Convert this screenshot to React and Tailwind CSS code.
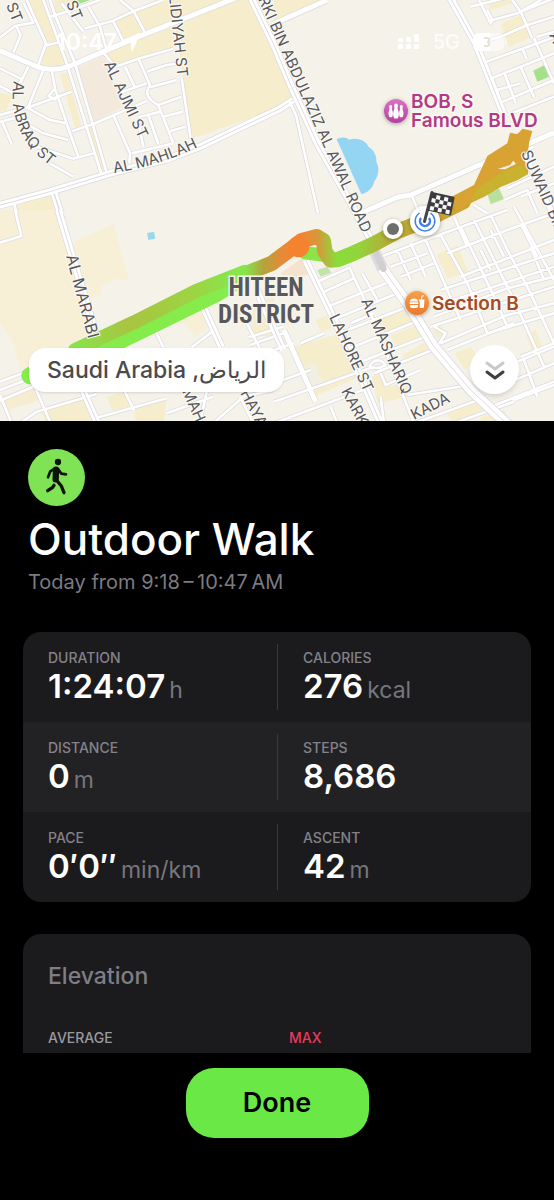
import React from "react";

// Street geometry is drawn at three units per pixel, one sheet per quarter of the map.
const SHEETS = [
  {
    at: "translate(0 0)",
    land: [
      ["#f6edcc", "M525 78L700 0L757 0L822 135L900 290L822 330L570 418L550 230Z"],
      ["#f6edcc", "M345 66L405 35L500 0L690 0L480 85L370 125Z"],
      ["#f6edcc", "M315 155L522 80L520 142L345 195Z"],
      ["#f6edcc", "M80 0L132 0L180 128L138 126Z"],
      ["#f6edcc", "M140 140L185 130L200 185L150 205L122 196Z"],
      ["#f6edcc", "M165 0L240 0L160 45Z"],
      ["#f6edcc", "M180 222L202 218L245 380L225 385Z"],
      ["#f6edcc", "M265 385L283 378L312 510L302 512Z"],
      ["#f6edcc", "M0 278L38 288L20 330L0 338Z"],
      ["#f6edcc", "M45 612L155 582L165 640L45 640Z"],
      ["#f3e9dd", "M232 203L312 166L365 322L282 365Z"],
      ["#a6e08c", "M222 0L270 0L235 13Z"],
    ],
    minor:
      "M0 112L45 78L100 68L70 8M50 80L62 105L40 158M80 0L138 130L115 195M138 136L180 126M130 0L200 190L305 525M150 0L165 45L225 190L320 518M150 50L200 35L300 0M185 10L250 95M265 20L300 80L320 150M360 0L400 32L435 98M255 85L340 62L400 34L490 0M340 65L372 128M0 205L70 240M0 258L45 282M85 200L60 250M130 210L85 320M0 345L90 320L215 275M85 325L150 360L200 370M80 372L130 400L205 420M5 362L35 432M0 366L60 350M155 210L165 265L205 385L235 470M165 265L146 288L168 300M215 394L280 372L440 303M110 440L220 476L282 460M150 490L220 530M312 160L345 200M345 200L420 175L520 146M375 200L405 262M415 175L450 255Q425 290 475 315L520 430M440 215L500 195L525 192M360 278L440 250M450 262L530 240M475 315L545 290M490 350L550 335M505 395L555 380M545 235L572 415M340 345L390 460L388 490M395 460L520 430M445 345L475 432M415 365L430 440M415 352L482 335M153 572L175 640M165 570L188 640M40 600L50 640",
    major: "M730 -15L410 112L240 185Q160 225 100 195L0 152",
    double: "M-5 617L150 575L330 520L500 478L600 440L840 326L880 300M752 -10L822 135L876 264",
  },
  {
    at: "translate(822 0)",
    land: [
      ["#f6edcc", "M0 0L150 0L0 62Z"],
      ["#f6edcc", "M680 72L750 40L775 110L705 140Z"],
      ["#f6edcc", "M640 0L705 0L720 8L650 30Z"],
      ["#a6e08c", "M778 212L812 195L826 230L790 245Z"],
      ["#b9e09c", "M638 575L675 565L690 597L650 613Z"],
      ["#93d5f3", "M188 418C205 409 216 412 225 419C252 411 277 424 283 440C300 450 309 468 307 487C319 505 312 532 300 545C298 566 276 580 262 582Z"],
    ],
    minor:
      "M615 0L650 70L655 60L730 40L840 -5M590 20L690 -5M610 130L680 110L760 75L840 50M715 0L740 35L775 115M740 35L800 0M640 30L655 60M625 190L720 155L840 112M745 145L758 178M640 240L740 200L840 160M655 235L690 335M690 215L725 310M740 200L780 292M660 272L740 250M670 312L840 240M780 115L840 250M700 345L840 290M620 500L780 440M700 565L840 500M740 590L840 550M415 590L435 640M600 615L640 640M690 600L760 570L790 640M45 302L66 345L132 640M790 110L840 95",
    major: "M260 640L370 592L410 585L600 502L840 398M720 400L750 460L840 650M-5 73L160 0",
    double: "M530 -5L605 130L690 345M55 265L130 430L300 735",
  },
  {
    at: "translate(0 630)",
    land: [
      ["#f7f0d6", "M0 0L170 0L215 130L228 92L340 42L388 210L350 206L300 230L305 258L278 265L260 385L60 480L40 400L0 340Z"],
      ["#f7f0d6", "M530 320L600 290L625 350L590 380Z"],
      ["#f6ecd0", "M0 560L100 530L120 570L20 600Z"],
      ["#f6edcc", "M120 600L260 560L285 640L140 640Z"],
      ["#f6edcc", "M320 560L378 545L392 595L340 605Z"],
      ["#f6edcc", "M400 600L500 570L490 640L410 640Z"],
      ["#f6edcc", "M760 290L822 260L822 380L750 375Z"],
      ["#9bd8ee", "M441 69L462 65L466 86L445 90Z"],
    ],
    minor:
      "M45 0L64 78L0 98M0 515L80 485M0 540L85 508M0 572L100 530L250 485M100 520L152 640M0 555L35 640M60 640L110 605L290 552M375 545L402 602M285 625L500 565M465 360L490 412M575 412L640 362M720 300L800 455M745 382L850 350M750 405L850 370M500 610L640 560M640 640L730 560L822 540M720 560L760 640M620 545L600 640",
    major: "",
    double: "M175 0L220 150L300 410M240 520L295 645M605 280L665 412M770 240L850 420",
  },
  {
    at: "translate(822 630)",
    land: [
      ["#f5e3cf", "M20 190L90 140L112 190L40 215Z"],
      ["#c2e3ad", "M130 180L160 170L172 188L140 200Z"],
      ["#f6edcc", "M488 135L550 105L582 185L520 205Z"],
      ["#f6edcc", "M62 410L200 370L255 500L120 560Z"],
      ["#f2eee0", "M90 470L120 455L150 520L115 540Z"],
      ["#f6edcc", "M125 330L165 315L185 350L140 365Z"],
      ["#f6edcc", "M300 330L380 298L425 335L335 370Z"],
      ["#f6edcc", "M350 375L435 345L455 380L370 420Z"],
      ["#f6edcc", "M385 435L465 390L500 415L400 460Z"],
      ["#f6edcc", "M295 500L325 485L350 530L400 510L410 560L310 580Z"],
      ["#f6edcc", "M475 360L500 345L515 370L490 385Z"],
      ["#f6edcc", "M540 430L590 412L610 440L575 480Z"],
      ["#f6edcc", "M510 600L620 560L660 585L540 640Z"],
      ["#f6edcc", "M755 375L785 360L805 410L775 425Z"],
      ["#f6edcc", "M620 620L690 600L710 640L620 640Z"],
    ],
    minor:
      "M130 215L230 172M150 245L240 205M160 290L360 210M175 330L370 250M195 370L390 295M215 420L425 335M235 465L460 378M300 490L500 410M285 470Q310 435 335 465Q310 480 285 470M320 490L335 525L440 480M400 555L590 525M225 170L290 310L420 640M265 190L310 270M320 140L440 95L700 0M350 170L460 130M380 200L480 160M370 120L410 210M410 100L455 200M455 90L520 240L560 330M500 75L580 220L640 370M560 50L660 260L700 350M600 30L720 270L810 470M650 15L700 120L760 230L840 400M720 -10L840 210M520 130L700 60L840 10M560 200L840 90M500 240L840 130M510 280L840 170M480 320L700 235L840 200M470 350L840 230M500 400L700 315L840 280M640 370L840 310M480 350L515 370L490 410M520 420L720 340M740 440L840 400M650 60L690 140M740 40L790 140M620 120L650 180M770 110L810 210M540 20L580 110M620 500L840 410M700 520L840 460M750 450L790 560M640 595L840 515M720 570L840 525M0 520L110 480M0 575L300 470M0 640L280 535M320 560L330 640M170 590L190 640M0 420L60 400M420 640L640 560M540 640L720 575M80 400L150 370M230 340L300 310",
    major: "M30 360L125 575",
    double: "M95 150L160 285L240 455L320 640",
  },
];

const streetNames = [
  ["ST", 6, 5, 68, 15],
  ["ST", 66, 3, 68, 15],
  ["AL AJMI ST", 104, 64, 65, 15],
  ["LIDIYAH ST", 169, -4, 84, 15],
  ["RKI BIN ABDULAZIZ AL AWAL ROAD", 258, -1, 66, 15],
  ["AL MARABI", 66, 256, 75, 16],
  ["LAHORE ST", 329, 317, 65, 15],
  ["AL MASHARIQ", 361, 301, 66, 15],
  ["KARK", 341, 391, 62, 15],
  ["MAH", 182, 391, 66, 15],
  ["HAYA", 240, 393, 62, 15],
  ["SUWAID BIN", 521, 153, 66, 15],
  ["AY", 549, 35, 66, 15],
];

function StreetMap() {
  return (
    <svg
      className="block h-full w-full"
      viewBox="0 0 554 421"
      preserveAspectRatio="xMidYMid slice"
      role="img"
      aria-label="Map of the walking route"
    >
      <defs>
        <linearGradient id="west" gradientUnits="userSpaceOnUse" x1="210" y1="1040" x2="740" y2="800">
          <stop offset="0" stopColor="#84e64a" />
          <stop offset=".32" stopColor="#a9c441" />
          <stop offset=".7" stopColor="#9cd444" />
          <stop offset="1" stopColor="#82ec4e" />
        </linearGradient>
        <linearGradient id="middle" gradientUnits="userSpaceOnUse" x1="735" y1="0" x2="1660" y2="0">
          <stop offset="0" stopColor="#85e54a" />
          <stop offset=".06" stopColor="#b3a33c" />
          <stop offset=".12" stopColor="#e78a36" />
          <stop offset=".18" stopColor="#f38333" />
          <stop offset=".24" stopColor="#d59a38" />
          <stop offset=".27" stopColor="#a9bf3c" />
          <stop offset=".3" stopColor="#89dd3d" />
          <stop offset=".37" stopColor="#93d43a" />
          <stop offset=".46" stopColor="#b3ad37" />
          <stop offset=".6" stopColor="#c9a333" />
          <stop offset="1" stopColor="#d7a032" />
        </linearGradient>
        <linearGradient id="pink" x1="0" y1="0" x2="0" y2="1">
          <stop offset="0" stopColor="#dd72c4" />
          <stop offset="1" stopColor="#b23fa0" />
        </linearGradient>
        <linearGradient id="orange" x1="0" y1="0" x2="0" y2="1">
          <stop offset="0" stopColor="#f9a04a" />
          <stop offset="1" stopColor="#ea7a2e" />
        </linearGradient>
        <filter id="drop" x="-50%" y="-50%" width="200%" height="200%">
          <feDropShadow dx="0" dy="1" stdDeviation="2" floodOpacity=".35" />
        </filter>
        <path id="abraq" d="M14 81C11 98 13 114 20 130S36 156 58 171" />
        <path id="mahlah" d="M114 173Q160 166 202 145" />
        <path id="kada" d="M414 420L466 394" />
      </defs>

      <rect width="554" height="421" fill="#f5f2e9" />
      <g transform="scale(.33333)" fill="none" strokeLinejoin="round">
        {SHEETS.map((s) => (
          <g key={s.at} transform={s.at}>
            {s.land.map(([fill, d]) => (
              <path key={d} d={d} fill={fill} />
            ))}
          </g>
        ))}
        {SHEETS.map((s) => (
          <g key={s.at} transform={s.at} stroke="#d9d8de">
            <path d={s.minor} strokeWidth="12" />
            <path d={s.major} strokeWidth="19" />
            <path d={s.double} strokeWidth="24" />
          </g>
        ))}
        {SHEETS.map((s) => (
          <g key={s.at} transform={s.at} stroke="#ffffff">
            <path d={s.minor} strokeWidth="8" />
            <path d={s.major} strokeWidth="15" />
            <path d={s.double} strokeWidth="20" />
            <path d={s.double} strokeWidth="3" stroke="#dcdbe1" />
          </g>
        ))}

        <path d="M1122 750L1147 805L1222 910L1302 1040L1412 1170L1530 1280" stroke="#dcdbe0" strokeWidth="34" />
        <path d="M1147 805L1222 910L1302 1040L1412 1170L1530 1280" stroke="#fff" strokeWidth="29" />
        <path d="M1147 805L1222 910L1302 1040L1412 1170L1530 1280" stroke="#dcdbe0" strokeWidth="3" />
        <path d="M1124 752L1150 806" stroke="#d2d0ce" strokeWidth="20" strokeLinecap="round" />

        <g strokeLinecap="round" strokeLinejoin="round">
          <path d="M90 1127L260 1070L480 963L650 880L735 825" stroke="#85ec4c" strokeWidth="52" />
          <path d="M225 1050L400 968L590 872L735 815" stroke="url(#west)" strokeWidth="42" />
          <path d="M915 758L985 768" stroke="#8be54a" strokeWidth="40" />
          <path
            d="M740 820L815 790L875 745L905 722L950 710L970 722L975 755L992 780L1015 778L1060 760L1120 733L1190 695L1280 660L1390 605"
            stroke="url(#middle)"
            strokeWidth="46"
          />
          <circle cx="896" cy="740" r="32" fill="#f5822f" />
        </g>
        <path
          d="M1355 590L1422 555L1447 500L1462 468L1522 430L1530 398L1552 402L1568 386L1597 393L1588 425L1584 452L1568 476L1585 498L1584 522L1552 540L1502 560L1452 590L1412 610L1370 632Z"
          fill="#d9a333"
        />
        <path d="M1462 545L1510 515L1570 495L1584 522L1552 540L1502 560L1452 590L1412 602L1430 568Z" fill="#c7b32f" />
        <path d="M1493 507L1530 495L1540 482L1548 492L1515 508Z" fill="#f6f0e0" />
      </g>

      <g fill="#57575b" stroke="#fbfaf6" strokeWidth="2" paintOrder="stroke" fontFamily="Inter, sans-serif">
        {streetNames.map(([name, x, y, angle, size]) => (
          <text key={name + x} fontSize={size} transform={`translate(${x} ${y}) rotate(${angle})`}>
            {name}
          </text>
        ))}
        <text fontSize="15"><textPath href="#abraq">AL ABRAQ ST</textPath></text>
        <text fontSize="15"><textPath href="#mahlah">AL MAHLAH</textPath></text>
        <text fontSize="15"><textPath href="#kada">KADA</textPath></text>
      </g>

      <g
        fill="#58585c"
        stroke="#f7f4ea"
        strokeWidth="3"
        paintOrder="stroke"
        textAnchor="middle"
        fontFamily="'Roboto Condensed', Roboto, sans-serif"
        fontWeight="700"
        fontSize="25"
      >
        <text x="266" y="296">HITEEN</text>
        <text x="266" y="323">DISTRICT</text>
      </g>

      <g fontFamily="Inter, sans-serif" fontWeight="600" stroke="#faf8f2" strokeWidth="3" paintOrder="stroke">
        <g fill="#b43a86" fontSize="19">
          <text x="411" y="108">BOB, S</text>
          <text x="411" y="127">Famous BLVD</text>
        </g>
        <text x="432" y="310" fill="#a34a26" fontSize="19">Section B</text>
      </g>

      <g filter="url(#drop)">
        <circle cx="396" cy="111" r="12" fill="url(#pink)" />
      </g>
      <g fill="#fff">
        <path d="M396 103.500c1.300 0 1.900 1 1.800 2.200-.1 1.400-.5 2.200-.1 3.500.5 1.500 1.200 2.700 1.200 4.700 0 1.900-.5 3.200-1.200 4.600h-3.400c-.7-1.400-1.200-2.700-1.200-4.600 0-2 .7-3.200 1.200-4.700.4-1.300 0-2.100-.1-3.500-.1-1.200.5-2.200 1.800-2.200z" />
        <path d="M390.700 105c1 0 1.500.8 1.400 1.800 0 1-.4 1.800-.1 2.700.4 1.200.9 2.200.9 3.900 0 1.600-.4 2.700-.9 3.800h-2.600c-.5-1.100-.9-2.200-.9-3.800 0-1.700.5-2.700.9-3.900.3-.9-.1-1.700-.1-2.700-.1-1 .4-1.800 1.400-1.800z" />
        <path d="M401.300 105c1 0 1.500.8 1.400 1.800 0 1-.4 1.800-.1 2.700.4 1.200.9 2.200.9 3.900 0 1.600-.4 2.700-.9 3.800H400c-.5-1.100-.9-2.200-.9-3.800 0-1.700.5-2.700.9-3.900.3-.9-.1-1.700-.1-2.700-.1-1 .4-1.800 1.400-1.800z" />
      </g>

      <g filter="url(#drop)">
        <circle cx="417" cy="303" r="12" fill="url(#orange)" />
      </g>
      <g fill="#fff">
        <path d="M410 301.500c0-2 1.700-3 4-3s4 1 4 3z" />
        <rect x="409.500" y="302.300" width="9" height="1.800" rx=".9" />
        <path d="M410 305h8v1c0 1.300-.7 2-2 2h-4c-1.300 0-2-.7-2-2z" />
        <path d="M418.500 299.500h6l-.7 8.500h-4.100l.1-2.500v-3.500z" />
        <path d="M421.300 300l.6-3.800 2-.5" fill="none" stroke="#fff" strokeWidth="1" />
      </g>

      <g filter="url(#drop)">
        <circle cx="393" cy="229" r="10" fill="#fff" />
        <circle cx="425" cy="221" r="15" fill="#fff" />
      </g>
      <circle cx="393" cy="229" r="6" fill="#6d6d6b" />
      <g fill="none" stroke="#3f82e8">
        <path d="M430.500 213A9.800 9.800 0 1 1 419.500 213" strokeWidth="1.500" />
        <path d="M421 218A5 5 0 1 0 429 218" strokeWidth="2.500" />
      </g>
      <path d="M424.500 221.500L432 192.500" stroke="#47474b" strokeWidth="3" strokeLinecap="round" />
      <g transform="matrix(.98 .22 -.2 .98 432 193)">
        <rect x="-1" y="-1" width="24" height="19" rx="1" fill="#3c3c40" />
        {Array.from({ length: 20 }, (_, i) => [i % 5, Math.floor(i / 5)])
          .filter(([c, r]) => (c + r) % 2 === 1)
          .map(([c, r]) => (
            <rect key={`${c}-${r}`} x={1 + c * 4} y={1 + r * 4} width="4" height="4" fill="#f7f7f5" />
          ))}
      </g>
    </svg>
  );
}

function StatusBar() {
  return (
    <div className="absolute inset-x-0 top-0 flex items-center justify-between pt-7 pr-[46px] pl-14 text-white">
      <div className="flex items-center gap-1">
        <span className="text-[23px] leading-7 font-semibold">10:47</span>
        <svg className="size-5" viewBox="0 0 20 20" aria-hidden="true">
          <path d="M19 1L1 9l9 1 1 9z" fill="currentColor" stroke="currentColor" strokeWidth="1" strokeLinejoin="round" />
        </svg>
      </div>
      <div className="flex items-center gap-3">
        <svg className="h-5 w-6" viewBox="0 0 24 20" fill="currentColor" aria-hidden="true">
          <rect x="1" y="12" width="5" height="5" rx="1.500" />
          <rect x="9" y="12" width="5" height="5" rx="1.500" />
          <rect x="17" y="12" width="5" height="5" rx="1.500" />
          <rect x="1" y="6" width="5" height="4" rx="1.500" />
          <rect x="9" y="5" width="5" height="5" rx="1.500" />
          <rect x="17" y="2" width="5" height="8" rx="1.500" />
        </svg>
        <span className="text-xl leading-7 font-medium opacity-80">5G</span>
        <svg className="h-5 w-9" viewBox="0 0 36 20" aria-hidden="true">
          <rect x="1" y="1" width="31" height="18" rx="6" fill="#fff" opacity=".55" />
          <path d="M7 1h11v18H7a6 6 0 0 1-6-6V7a6 6 0 0 1 6-6z" fill="#fff" />
          <path d="M12 6h3c3 0 3 4 0 4 3 0 3 4 0 4h-3" fill="none" stroke="#e5e2d8" strokeWidth="2" />
          <path d="M33 7c2 1 2 5 0 6z" fill="#fff" opacity=".7" />
        </svg>
      </div>
    </div>
  );
}

const stats = [
  [["DURATION", "1:24:07", "h"], ["CALORIES", "276", "kcal"]],
  [["DISTANCE", "0", "m"], ["STEPS", "8,686", ""]],
  [["PACE", "0′0″", "min/km"], ["ASCENT", "42", "m"]],
];

function Stat({ label, value, unit }) {
  return (
    <div>
      <dt className="text-sm leading-4 font-medium text-[#838289]">{label}</dt>
      <dd className="flex items-baseline gap-1 leading-10">
        <span className="text-[33px] font-semibold text-white">{value}</span>
        {unit && <span className="text-[23px] leading-10 text-[#77767d]">{unit}</span>}
      </dd>
    </div>
  );
}

export default function App() {
  return (
    <div className="flex min-h-screen flex-col bg-black font-['Inter',sans-serif] text-white">
      <header className="relative h-[421px] overflow-hidden">
        <StreetMap />
        <StatusBar />
        <div className="absolute inset-x-0 bottom-0 flex items-end justify-between pr-[35px] pb-[27px] pl-[29px]">
          <p
            dir="rtl"
            className="mb-0.5 rounded-2xl bg-white px-[18px] py-2 text-[23px] leading-7 font-medium text-[#4a4a4c] shadow-sm"
          >
            الرياض, Saudi Arabia
          </p>
          <button
            type="button"
            aria-label="Collapse map"
            className="flex size-[49px] items-center justify-center rounded-full bg-white shadow-md"
          >
            <svg className="h-6 w-6" viewBox="0 0 24 24" fill="none" strokeWidth="3" strokeLinecap="round" strokeLinejoin="round" aria-hidden="true">
              <path d="M4 5l8 6 8-6" stroke="#c9c9cb" />
              <path d="M4 14l8 6 8-6" stroke="#3f3f42" />
            </svg>
          </button>
        </div>
      </header>

      <main className="flex flex-1 flex-col px-[23px] pt-7">
        <section className="px-[5px]">
          <svg className="size-[57px]" viewBox="84 57 171 171" role="img" aria-label="Walk">
            <circle cx="169.500" cy="142.500" r="85.500" fill="#7fe355" />
            <g fill="none" stroke="#0b1407" strokeLinecap="round" strokeLinejoin="round">
              <circle cx="174" cy="96" r="9.500" fill="#0b1407" stroke="none" />
              <path d="M168 119L167 148" strokeWidth="19" />
              <path d="M165 115L151 124L144 142" strokeWidth="8" />
              <path d="M175 118L184 131L198 133" strokeWidth="8" />
              <path d="M169 150L184 168L192 188" strokeWidth="10" />
              <path d="M162 166L157 173L143 182" strokeWidth="10" />
            </g>
          </svg>
          <h1 className="mt-2 text-[44px] leading-[50px] font-medium">Outdoor Walk</h1>
          <p className="mt-1 text-xl leading-7 text-[#7c7b82]">Today from 9:18&#8201;–&#8201;10:47&#8201;AM</p>
        </section>

        <dl className="mt-9 overflow-hidden rounded-[18px] bg-[#1b1b1d]">
          {stats.map((row) => (
            <div key={row[0][0]} className="grid h-[90px] grid-cols-2 even:bg-[#222224]">
              {row.map(([label, value, unit]) => (
                <div key={label} className="my-3 pt-1.5 pl-[25px] even:border-l even:border-[#3a3a3d]">
                  <Stat label={label} value={value} unit={unit} />
                </div>
              ))}
            </div>
          ))}
        </dl>

        <section className="mt-8 flex-1 rounded-t-[18px] bg-[#1b1b1d] px-[25px] pt-7">
          <h2 className="text-[23px] leading-7 font-medium text-[#7f7e85]">Elevation</h2>
          <div className="mt-10 grid grid-cols-[241px_1fr] pb-1 text-sm leading-4 font-medium">
            <span className="text-[#9a99a0]">AVERAGE</span>
            <span className="text-[#e93a5c]">MAX</span>
          </div>
        </section>
      </main>

      <footer className="flex justify-center pt-[15px] pb-[62px]">
        <button
          type="button"
          className="h-[70px] w-[183px] rounded-[28px] bg-[#6ae845] text-[27px] leading-8 font-semibold text-black"
        >
          Done
        </button>
      </footer>
    </div>
  );
}
